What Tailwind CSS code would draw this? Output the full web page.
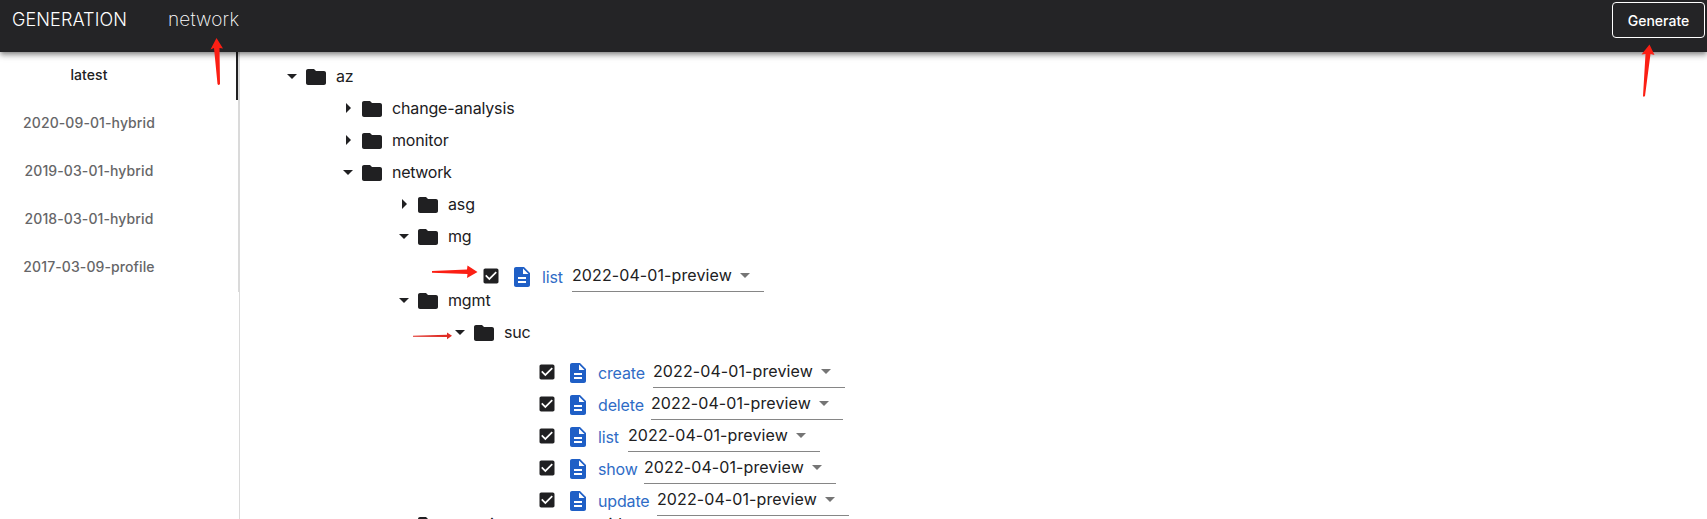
<!DOCTYPE html>
<html lang="en">
<head>
<meta charset="utf-8">
<title>Generation - network</title>
<script src="https://cdn.jsdelivr.net/npm/@tailwindcss/browser@4"></script>
</head>
<body class="relative flex h-[519px] flex-col overflow-hidden bg-white fill-[#202022] font-['Inter',sans-serif] text-[#202022]">
<svg class="hidden">
  <symbol id="down" viewBox="0 0 24 24"><path d="M7 10l5 5 5-5z"/></symbol>
  <symbol id="right" viewBox="0 0 24 24"><path d="M10 17l5-5-5-5z"/></symbol>
  <symbol id="folder" viewBox="0 0 24 24"><path d="M10 4H4c-1.1 0-1.99.9-1.99 2L2 18c0 1.1.9 2 2 2h16c1.1 0 2-.9 2-2V8c0-1.1-.9-2-2-2h-8l-2-2z"/></symbol>
  <symbol id="doc" viewBox="0 0 24 24"><path d="M14 2H6c-1.1 0-1.99.9-1.99 2L4 20c0 1.1.89 2 1.99 2H18c1.1 0 2-.9 2-2V8l-6-6zm2 16H8v-2h8v2zm0-4H8v-2h8v2zm-3-5V3.500L18.500 9H13z"/></symbol>
  <symbol id="check" viewBox="0 0 24 24"><path d="M19 3H5c-1.110 0-2 .9-2 2v14c0 1.100.890 2 2 2h14c1.110 0 2-.9 2-2V5c0-1.100-.890-2-2-2zm-9 14l-5-5 1.410-1.410L10 14.170l7.590-7.590L19 8l-9 9z"/></symbol>
</svg>

<header class="z-10 flex h-[52px] shrink-0 items-start bg-[#242426] pl-3 text-white shadow-[0_2px_4px_-1px_rgba(0,0,0,0.3),0_4px_5px_rgba(0,0,0,0.2),0_1px_10px_rgba(0,0,0,0.15)]">
  <div class="mt-1.5 w-[155px] text-[18px] leading-7 font-light tracking-[0.1px]">GENERATION</div>
  <div class="mt-1.5 ml-px text-[19px] leading-7 font-extralight tracking-[0.15px]">network</div>
  <button class="mt-0.5 mr-[2px] ml-auto h-9 w-[93px] rounded border border-white text-[14px] font-medium">Generate</button>
</header>

<main class="flex min-h-0 flex-1">
  <aside class="w-60 shrink-0 border-r border-[#dadada]">
    <nav class="flex w-full flex-col border-r border-[#dadada] text-[14px] font-medium tracking-[0.1px] text-[#666668]">
      <div class="flex h-12 items-center border-r-2 border-[#202022] text-[#202022]"><span class="w-[178px] pb-[3px] text-center">latest</span></div>
      <div class="flex h-12 items-center"><span class="w-[178px] pb-[3px] text-center">2020-09-01-hybrid</span></div>
      <div class="flex h-12 items-center"><span class="w-[178px] pb-[3px] text-center">2019-03-01-hybrid</span></div>
      <div class="flex h-12 items-center"><span class="w-[178px] pb-[3px] text-center">2018-03-01-hybrid</span></div>
      <div class="flex h-12 items-center"><span class="w-[178px] pb-[3px] text-center">2017-03-09-profile</span></div>
    </nav>
  </aside>

  <section class="flex-1 overflow-hidden pt-2 pl-10 text-[16px] leading-6 tracking-[-0.15px]">
    <div class="flex h-8 items-center"><svg class="size-6"><use href="#down"/></svg><svg class="mt-0.5 mr-2 size-6"><use href="#folder"/></svg>az</div>
    <div class="pl-14">
      <div class="flex h-8 items-center"><svg class="size-6"><use href="#right"/></svg><svg class="mt-0.5 mr-2 size-6"><use href="#folder"/></svg>change-analysis</div>
      <div class="flex h-8 items-center"><svg class="size-6"><use href="#right"/></svg><svg class="mt-0.5 mr-2 size-6"><use href="#folder"/></svg>monitor</div>
      <div class="flex h-8 items-center"><svg class="size-6"><use href="#down"/></svg><svg class="mt-0.5 mr-2 size-6"><use href="#folder"/></svg><span class="tracking-[-0.3px]">network</span></div>
      <div class="pl-14">
        <div class="flex h-8 items-center"><svg class="size-6"><use href="#right"/></svg><svg class="mt-0.5 mr-2 size-6"><use href="#folder"/></svg>asg</div>
        <div class="flex h-8 items-center"><svg class="size-6"><use href="#down"/></svg><svg class="mt-0.5 mr-2 size-6"><use href="#folder"/></svg>mg</div>
        <div class="flex h-8 items-center pt-4 pl-[89px]">
          <svg class="mr-[9px] size-5"><use href="#check"/></svg><svg class="mt-0.5 mr-2 size-6 fill-[#1f5fc6]"><use href="#doc"/></svg>
          <span class="mt-0.5 w-[30px] text-[#2f6cc6]">list</span>
          <div class="flex h-8 w-48 items-center justify-between border-b border-[#868686] pr-[7px] pb-px"><span class="tracking-[0.1px]">2022-04-01-preview</span><svg class="size-6 fill-[#757575]"><use href="#down"/></svg></div>
        </div>
        <div class="flex h-8 items-center"><svg class="size-6"><use href="#down"/></svg><svg class="mt-0.5 mr-2 size-6"><use href="#folder"/></svg>mgmt</div>
        <div class="pl-14">
          <div class="flex h-8 items-center"><svg class="size-6"><use href="#down"/></svg><svg class="mt-0.5 mr-2 size-6"><use href="#folder"/></svg>suc</div>
          <div class="flex h-8 items-center pt-4 pl-[89px]">
            <svg class="mr-[9px] size-5"><use href="#check"/></svg><svg class="mt-0.5 mr-2 size-6 fill-[#1f5fc6]"><use href="#doc"/></svg>
            <span class="mt-0.5 w-[55px] text-[#2f6cc6]">create</span>
            <div class="flex h-8 w-48 items-center justify-between border-b border-[#868686] pr-[7px] pb-px"><span class="tracking-[0.1px]">2022-04-01-preview</span><svg class="size-6 fill-[#757575]"><use href="#down"/></svg></div>
          </div>
          <div class="flex h-8 items-center pt-4 pl-[89px]">
            <svg class="mr-[9px] size-5"><use href="#check"/></svg><svg class="mt-0.5 mr-2 size-6 fill-[#1f5fc6]"><use href="#doc"/></svg>
            <span class="mt-0.5 w-[53px] text-[#2f6cc6]">delete</span>
            <div class="flex h-8 w-48 items-center justify-between border-b border-[#868686] pr-[7px] pb-px"><span class="tracking-[0.1px]">2022-04-01-preview</span><svg class="size-6 fill-[#757575]"><use href="#down"/></svg></div>
          </div>
          <div class="flex h-8 items-center pt-4 pl-[89px]">
            <svg class="mr-[9px] size-5"><use href="#check"/></svg><svg class="mt-0.5 mr-2 size-6 fill-[#1f5fc6]"><use href="#doc"/></svg>
            <span class="mt-0.5 w-[30px] text-[#2f6cc6]">list</span>
            <div class="flex h-8 w-48 items-center justify-between border-b border-[#868686] pr-[7px] pb-px"><span class="tracking-[0.1px]">2022-04-01-preview</span><svg class="size-6 fill-[#757575]"><use href="#down"/></svg></div>
          </div>
          <div class="flex h-8 items-center pt-4 pl-[89px]">
            <svg class="mr-[9px] size-5"><use href="#check"/></svg><svg class="mt-0.5 mr-2 size-6 fill-[#1f5fc6]"><use href="#doc"/></svg>
            <span class="mt-0.5 w-[46px] text-[#2f6cc6]">show</span>
            <div class="flex h-8 w-48 items-center justify-between border-b border-[#868686] pr-[7px] pb-px"><span class="tracking-[0.1px]">2022-04-01-preview</span><svg class="size-6 fill-[#757575]"><use href="#down"/></svg></div>
          </div>
          <div class="flex h-8 items-center pt-4 pl-[89px]">
            <svg class="mr-[9px] size-5"><use href="#check"/></svg><svg class="mt-0.5 mr-2 size-6 fill-[#1f5fc6]"><use href="#doc"/></svg>
            <span class="mt-0.5 w-[59px] text-[#2f6cc6]">update</span>
            <div class="flex h-8 w-48 items-center justify-between border-b border-[#868686] pr-[7px] pb-px"><span class="tracking-[0.1px]">2022-04-01-preview</span><svg class="size-6 fill-[#757575]"><use href="#down"/></svg></div>
          </div>
        </div>
        <div class="flex h-8 items-center"><svg class="size-6"><use href="#right"/></svg><svg class="mt-0.5 mr-2 size-6"><use href="#folder"/></svg>security-partner-provider</div>
      </div>
    </div>
  </section>
</main>

<!-- annotation arrows -->
<svg class="pointer-events-none absolute inset-0 z-20 h-[519px] w-[1707px] fill-[#fb1f14]">
  <path d="M216.500 38L223 48.500L219.500 48L220 84Q218.500 86 217.500 84L214 48L210.500 49.500Z"/>
  <path d="M1649.500 44.500L1654.500 55L1650.500 54L1645 96Q1643.500 97.500 1643 96L1645.500 54L1641.500 54.500Z"/>
  <path d="M432 271L467 269.500L467.500 265.500L477.500 272L467 278L467.500 274L432 272.700Z"/>
  <path d="M413 335.800L447 334.800V332.500L452 335.800L447 339.300V337L413 336.700Z" fill="#df2c24"/>
</svg>
</body>
</html>
